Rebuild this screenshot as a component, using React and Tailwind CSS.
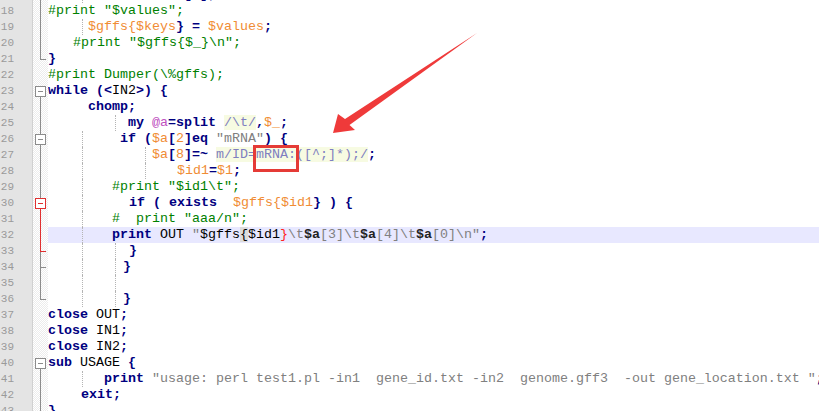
import React from "react";

const S = {
  k: "font-bold text-[#000080]",
  c: "text-[#008000]",
  v: "text-[#f08c34]",
  s: "text-[#808080]",
  r: "text-[#7f7fc0] bg-[#f7fbe2]",
  a: "text-[#c050c0]",
  d: "text-black",
  b: "font-bold text-[#222]",
  m: "text-black bg-[#dcdcdc]",
  x: "text-[#ff2020]",
};

// [lineNo, indent px, fold marker, guides, tokens]
const lines = [
  [17, 40, "line", [34], [["$values = $a", "v"], ["[", "k"], ["8", "v"], ["];", "k"]]],
  [18, 0, "line", [], [['#print "$values";', "c"]]],
  [19, 40, "line", [34], [["$gffs{$keys", "v"], ["}", "k"], [" ", "d"], ["=", "k"], [" ", "d"], ["$values", "v"], [";", "k"]]],
  [20, 25, "line", [], [['#print "$gffs{$_}\\n";', "c"]]],
  [21, 0, "end", [], [["}", "k"]]],
  [22, 0, "none", [], [["#print Dumper(\\%gffs);", "c"]]],
  [23, 0, "box", [], [["while", "k"], [" ", "d"], ["(<", "k"], ["IN2", "d"], [">)", "k"], [" ", "d"], ["{", "k"]]],
  [24, 40, "line", [], [["chomp;", "k"]]],
  [25, 80, "line", [67], [["my", "k"], [" ", "d"], ["@a", "a"], ["=", "k"], ["split", "k"], [" ", "d"], ["/\\t/", "r"], [",", "k"], ["$_", "v"], [";", "k"]]],
  [26, 72, "subbox", [34], [["if", "k"], [" ", "d"], ["(", "k"], ["$a", "v"], ["[", "k"], ["2", "v"], ["]", "k"], ["eq", "k"], [" ", "d"], ['"mRNA"', "s"], [")", "k"], [" ", "d"], ["{", "k"]]],
  [27, 104, "line", [34, 97], [["$a", "v"], ["[", "k"], ["8", "v"], ["]", "k"], ["=~", "k"], [" ", "d"], ["m/ID=mRNA:([^;]*);/", "r"], [";", "k"]]],
  [28, 129, "line", [34, 97], [["$id1", "v"], ["=", "k"], ["$1", "v"], [";", "k"]]],
  [29, 64, "line", [34], [['#print "$id1\\t";', "c"]]],
  [30, 81, "redbox", [34], [["if", "k"], [" ", "d"], ["(", "k"], [" ", "d"], ["exists", "k"], ["  ", "d"], ["$gffs{$id1", "v"], ["}", "k"], [" ", "d"], [")", "k"], [" ", "d"], ["{", "k"]]],
  [31, 64, "redline", [34], [['#  print "aaa/n";', "c"]]],
  [32, 64, "redline", [34], [["print", "k"], [" OUT ", "d"], ['"', "s"], ["$gffs", "d"], ["{", "m"], ["$id1", "d"], ["}", "x"], ["\\t", "s"], ["$a", "b"], ["[3]\\t", "s"], ["$a", "b"], ["[4]\\t", "s"], ["$a", "b"], ['[0]\\n"', "s"], [";", "k"]]],
  [33, 81, "redtee", [34, 67], [["}", "k"]]],
  [34, 75, "tee", [34, 67], [["}", "k"]]],
  [35, 0, "line", [34, 67], []],
  [36, 75, "end", [34, 67], [["}", "k"]]],
  [37, 0, "none", [], [["close", "k"], [" OUT", "d"], [";", "k"]]],
  [38, 0, "none", [], [["close", "k"], [" IN1", "d"], [";", "k"]]],
  [39, 0, "none", [], [["close", "k"], [" IN2", "d"], [";", "k"]]],
  [40, 0, "box", [], [["sub", "k"], [" USAGE ", "d"], ["{", "k"]]],
  [41, 56, "line", [34], [["print", "k"], [" ", "d"], ['"usage: perl test1.pl -in1  gene_id.txt -in2  genome.gff3  -out gene_location.txt "', "s"], [";", "k"]]],
  [42, 33, "line", [], [["exit", "k"], [";", "k"]]],
  [43, 0, "end", [], [["}", "k"]]],
];

const FoldMark = ({ type }) => {
  const gray = "bg-[#8c8c8c]";
  const red = "bg-[#e03030]";
  if (type === "none") return null;
  if (type === "line" || type === "redline")
    return <span className={`absolute left-[7px] top-0 bottom-0 w-px ${type === "redline" ? red : gray}`} />;
  if (type === "end" || type === "tee" || type === "redtee") {
    const c = type === "redtee" ? red : gray;
    return (
      <>
        <span className={`absolute left-[7px] top-0 h-[9px] w-px ${c}`} />
        <span className={`absolute left-[7px] top-[8px] h-px w-[6px] ${c}`} />
        {type !== "end" && <span className={`absolute left-[7px] top-[9px] bottom-0 w-px ${gray}`} />}
      </>
    );
  }
  const isRed = type === "redbox";
  const border = isRed ? "border-[#e03030]" : "border-[#8c8c8c]";
  return (
    <>
      {type !== "box" && <span className={`absolute left-[7px] top-0 h-[3px] w-px ${gray}`} />}
      <span className={`absolute left-[2px] top-[3px] w-[11px] h-[11px] border bg-white ${border} flex items-center justify-center`}>
        <span className={`w-[5px] h-px ${isRed ? red : gray}`} />
      </span>
      <span className={`absolute left-[7px] top-[14px] bottom-0 w-px ${isRed ? red : gray}`} />
    </>
  );
};

const App = () => {
  return (
    <div className="relative w-[819px] h-[411px] overflow-hidden bg-white font-['Liberation_Mono','Courier_New',monospace]">
      <div className="mt-[-13px]">
        {lines.map(([no, indent, fold, guides, tokens]) => (
          <div key={no} className="flex h-4 leading-4">
            <div className="w-[14px] shrink-0 bg-[#e4e4e4] text-right text-[11px] text-[#9a9a9a] overflow-visible whitespace-nowrap">
              {no}
            </div>
            <div className="w-[19px] shrink-0 bg-[#e4e4e4] border-r border-[#d0d0d0]" />
            <div className="relative w-[15px] shrink-0 bg-[repeating-conic-gradient(#ececec_0_25%,#ffffff_0_50%)] bg-[length:2px_2px]">
              <FoldMark type={fold} />
            </div>
            <div className={`relative flex-1 whitespace-pre text-[13.33px] overflow-hidden ${no === 32 ? "bg-[#e8e8ff]" : ""}`}>
              {guides.map((g) => (
                <span key={g} className="absolute top-0 bottom-0 border-l border-dotted border-[#b4b4b4]" style={{ left: g }} />
              ))}
              <span className="relative" style={{ paddingLeft: indent }}>
                {tokens.map(([t, k], i) => (
                  <span key={i} className={S[k]}>
                    {t}
                  </span>
                ))}
              </span>
            </div>
          </div>
        ))}
      </div>

      {/* red annotation box */}
      <div className="absolute left-[253px] top-[145px] w-[46px] h-[27px] border-[3px] border-[#e53b36]" />

      {/* red arrow */}
      <svg className="absolute left-0 top-0" width="819" height="411" viewBox="0 0 819 411">
        <polygon
          points="477,33 349.5,125 355,130 333,133 338,114 345,119"
          fill="#ef3a3a"
        />
      </svg>
    </div>
  );
};

export default App;
